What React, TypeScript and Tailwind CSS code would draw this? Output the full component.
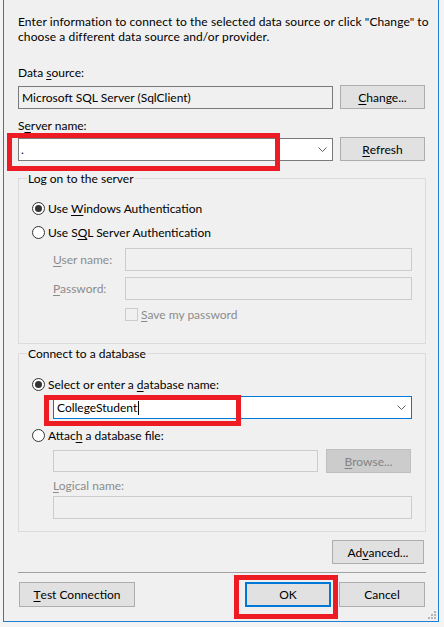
import React from 'react';

type Kids = { children?: React.ReactNode };

const U = ({ children }: Kids) => (
  <span className="underline decoration-1 underline-offset-[2px]">{children}</span>
);

function Button({
  children,
  className = '',
  disabled = false,
  focused = false,
}: Kids & { className?: string; disabled?: boolean; focused?: boolean }) {
  const tone = disabled
    ? 'border border-[#bfbfbf] bg-[#cccccc] text-[#838383]'
    : focused
      ? 'border-2 border-[#0078d7] bg-[#e1e1e1] text-black'
      : 'border border-[#adadad] bg-[#e1e1e1] text-black';
  return (
    <button
      type="button"
      className={`flex items-center justify-center leading-[15px] ${tone} ${className}`}
    >
      {children}
    </button>
  );
}

function Radio({ checked, children }: Kids & { checked?: boolean }) {
  return (
    <div className="ml-[13px] flex h-[15px] items-center gap-[3px] leading-[15px]">
      <span className="flex h-[13px] w-[13px] items-center justify-center rounded-full border border-[#333333] bg-white">
        {checked && <span className="h-[7px] w-[7px] rounded-full bg-[#333333]" />}
      </span>
      <span>{children}</span>
    </div>
  );
}

function Chevron() {
  return (
    <svg width="9" height="5" viewBox="0 0 9 5" className="mr-[5px]">
      <path d="M0.5 0.5 L4.5 4.5 L8.5 0.5" fill="none" stroke="#606060" strokeWidth="1" />
    </svg>
  );
}

function Group({ title, children, className = '' }: Kids & { title: string; className?: string }) {
  return (
    <fieldset className={`w-[408px] border border-[#dcdcdc] ${className}`}>
      <legend className="ml-[8px] px-[1px] leading-[15px]">{title}</legend>
      {children}
    </fieldset>
  );
}

export default function App() {
  return (
    <div className="relative h-[627px] w-[444px] overflow-hidden bg-[#f4f4f4] font-['Lato','Noto_Sans',sans-serif] text-[12px] text-black">
      <div className="relative ml-[3px] h-[622px] w-[436px] border-x border-b border-[#1c7fd5] bg-[#f0f0f0]">
        <div className="ml-[14px] w-[408px] pt-[14px]">
          <p className="whitespace-nowrap leading-[15px] tracking-[0.1px]">
            Enter information to connect to the selected data source or click "Change" to
            <br />
            choose a different data source and/or provider.
          </p>

          <div className="mt-[21px] leading-[15px]">
            Data <U>s</U>ource:
          </div>
          <div className="mt-[5px] flex h-[24px] w-[407px] items-center justify-between">
            <div className="flex h-[23px] w-[315px] items-center border border-[#7a7a7a] bg-[#f0f0f0] pl-[3px] leading-[15px]">
              Microsoft SQL Server (SqlClient)
            </div>
            <Button className="h-[24px] w-[85px]">
              <U>C</U>hange...
            </Button>
          </div>

          <div className="mt-[9px] leading-[15px]">
            S<U>e</U>rver name:
          </div>
          <div className="mt-[4px] flex h-[24px] w-[407px] items-center justify-between">
            <div className="flex h-[23px] w-[315px] items-center justify-between border border-[#7a7a7a] bg-white pl-[2px] leading-[15px]">
              <span>.</span>
              <Chevron />
            </div>
            <Button className="h-[24px] w-[85px]">
              <U>R</U>efresh
            </Button>
          </div>

          <Group title="Log on to the server" className="mt-[10px] pb-[22px]">
            <div className="mt-[15px]">
              <Radio checked>
                Use <U>W</U>indows Authentication
              </Radio>
            </div>
            <div className="mt-[9px]">
              <Radio>
                Use S<U>Q</U>L Server Authentication
              </Radio>
            </div>
            <div className="mt-[8px] flex items-center text-[#8c8c8c]">
              <span className="ml-[34px] w-[72px] leading-[15px]">
                <U>U</U>ser name:
              </span>
              <div className="h-[23px] w-[287px] border border-[#cccccc] bg-[#f0f0f0]" />
            </div>
            <div className="mt-[6px] flex items-center text-[#8c8c8c]">
              <span className="ml-[34px] w-[72px] leading-[15px]">
                <U>P</U>assword:
              </span>
              <div className="h-[23px] w-[287px] border border-[#cccccc] bg-[#f0f0f0]" />
            </div>
            <div className="mt-[8px] ml-[106px] flex h-[13px] items-center gap-[3px] text-[#8c8c8c]">
              <span className="h-[13px] w-[13px] border border-[#cccccc] bg-[#f0f0f0]" />
              <span className="leading-[15px]">
                <U>S</U>ave my password
              </span>
            </div>
          </Group>

          <Group title="Connect to a database" className="mt-[2px] pb-[12px]">
            <div className="mt-[16px]">
              <Radio checked>
                Select or enter a <U>d</U>atabase name:
              </Radio>
            </div>
            <div className="mt-[4px] ml-[34px] flex h-[23px] w-[359px] items-center justify-between border border-[#0078d7] bg-white pl-[3px] leading-[15px]">
              <span className="flex items-center">
                CollegeStudent
                <span className="ml-[1px] h-[14px] w-[1px] bg-black" />
              </span>
              <Chevron />
            </div>
            <div className="mt-[9px]">
              <Radio>
                Attac<U>h</U> a database file:
              </Radio>
            </div>
            <div className="mt-[6px] ml-[34px] flex h-[24px] items-center gap-[8px]">
              <div className="h-[22px] w-[265px] border border-[#cccccc] bg-[#f0f0f0]" />
              <Button disabled className="h-[24px] w-[85px]">
                <U>B</U>rowse...
              </Button>
            </div>
            <div className="mt-[5px] ml-[34px] leading-[15px] text-[#8c8c8c]">
              <U>L</U>ogical name:
            </div>
            <div className="mt-[3px] ml-[34px] h-[23px] w-[359px] border border-[#cccccc] bg-[#f0f0f0]" />
          </Group>

          <div className="mt-[8px] flex w-[406px] justify-end">
            <Button className="h-[24px] w-[92px]">
              Ad<U>v</U>anced...
            </Button>
          </div>

          <div className="mt-[8px] h-[1px] w-[408px] bg-[#a0a0a0]" />

          <div className="mt-[9px] flex w-[407px] items-center">
            <Button className="ml-[1px] h-[25px] w-[116px]">
              <U>T</U>est Connection
            </Button>
            <Button focused className="ml-auto h-[25px] w-[86px]">
              OK
            </Button>
            <Button className="ml-[8px] h-[25px] w-[86px]">Cancel</Button>
          </div>
        </div>

        {/* red highlight boxes drawn over the dialog */}
        <div className="absolute left-[3px] top-[133px] h-[38px] w-[273px] border-[5px] border-[#ed1c24]" />
        <div className="absolute left-[40px] top-[395px] h-[31px] w-[197px] border-[5px] border-[#ed1c24]" />
        <div className="absolute left-[230px] top-[575px] h-[44px] w-[104px] border-[5px] border-[#ed1c24]" />

        {/* size grip */}
        <div className="absolute bottom-[2px] right-[2px] grid grid-cols-3 gap-[1px]">
          <span className="h-[2px] w-[2px]" />
          <span className="h-[2px] w-[2px]" />
          <span className="h-[2px] w-[2px] bg-[#b4b4b4]" />
          <span className="h-[2px] w-[2px]" />
          <span className="h-[2px] w-[2px] bg-[#b4b4b4]" />
          <span className="h-[2px] w-[2px] bg-[#b4b4b4]" />
          <span className="h-[2px] w-[2px] bg-[#b4b4b4]" />
          <span className="h-[2px] w-[2px] bg-[#b4b4b4]" />
          <span className="h-[2px] w-[2px] bg-[#b4b4b4]" />
        </div>
      </div>
    </div>
  );
}
